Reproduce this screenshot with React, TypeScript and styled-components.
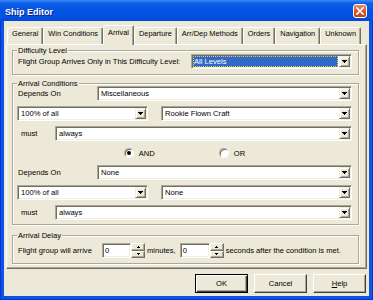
import React from 'react';
import styled, { createGlobalStyle, css } from 'styled-components';

const GlobalStyle = createGlobalStyle`
  html, body { margin: 0; padding: 0; background: #ECE9D8; }
  body {
    font-family: "Liberation Sans", Arial, sans-serif;
    font-size: 7.6px;
    line-height: 9px;
    color: #000;
  }
  * { box-sizing: border-box; }
`;

const Window = styled.div`
  width: 373px;
  height: 300px;
  display: flex;
  flex-direction: column;
  background: #0A55E2;
  box-shadow: inset 1px 0 #0831D9, inset -1px 0 #0831D9, inset 0 -1px #0831D9;
  overflow: hidden;
`;

const TitleBar = styled.div`
  height: 21px;
  flex: none;
  display: flex;
  align-items: flex-start;
  padding: 4px 6px 0 5px;
  background: linear-gradient(to bottom, #3C8CF8 0%, #0E5FE8 15%, #0454E4 50%, #0352E3 80%, #0446D8 100%);
`;

const Title = styled.span`
  flex: 1;
  padding-top: 2px;
  font: bold 9px/12px "Liberation Sans", Arial, sans-serif;
  color: #fff;
  text-shadow: 1px 1px 0 #0A1F8F;
`;

const CloseButton = styled.div`
  width: 14px;
  height: 14px;
  border: 1px solid #fff;
  border-radius: 3px;
  background: linear-gradient(to bottom, #EC8C6C 0%, #DA5A36 45%, #C8411C 100%);
  display: flex;
  align-items: center;
  justify-content: center;
`;

const Client = styled.div`
  flex: 1;
  margin: 0 4px 4px;
  background: #ECE9D8;
  padding: 4px 2px 3px 2px;
  display: flex;
  flex-direction: column;
`;

const TabRow = styled.div`
  height: 20px;
  display: flex;
  align-items: flex-end;
  padding-left: 1px;
  margin-bottom: -1px;
  position: relative;
  z-index: 1;
`;

const Tab = styled.div<{ $active?: boolean }>`
  height: 17px;
  margin-bottom: 1px;
  padding: 1px 4px 0;
  border: 1px solid;
  border-bottom: none;
  border-color: #fff #716F64 transparent #fff;
  border-radius: 2px 2px 0 0;
  box-shadow: inset -1px 0 #ACA899;
  background: #ECE9D8;
  white-space: nowrap;
  font-size: 7.4px;
  ${(p) =>
    p.$active &&
    css`
      height: 20px;
      margin-bottom: 0;
      padding-top: 2px;
    `}
`;

const Panel = styled.div`
  flex: none;
  border: 1px solid;
  border-color: #fff #716F64 #716F64 #fff;
  box-shadow: inset -1px -1px #ACA899;
  padding: 5px 7px 4px 5px;
  display: flex;
  flex-direction: column;
`;

const Group = styled.div<{ $mt?: number; $pb: number }>`
  margin-top: ${(p) => p.$mt ?? 0}px;
  border: 1px solid #ACA899;
  box-shadow: inset 1px 1px #fff, 1px 1px #fff;
  padding: 0 6px ${(p) => p.$pb}px 4px;
`;

const GroupTitle = styled.div`
  display: table;
  height: 9px;
  margin: -5px 0 -4px 0;
  padding: 0 1px;
  background: #ECE9D8;
  position: relative;
`;

const GroupBody = styled.div<{ $pt: number }>`
  padding-top: ${(p) => p.$pt}px;
  display: flex;
  flex-direction: column;
  gap: 5px;
`;

const Row = styled.div<{ $h?: number; $gap?: number; $justify?: string }>`
  height: ${(p) => p.$h ?? 15}px;
  display: flex;
  align-items: center;
  gap: ${(p) => p.$gap ?? 0}px;
  justify-content: ${(p) => p.$justify ?? 'flex-start'};
  white-space: nowrap;
`;

const Label = styled.span<{ $w: number; $indent?: number }>`
  flex: 0 0 ${(p) => p.$w}px;
  padding-left: ${(p) => p.$indent ?? 1}px;
`;

const Text = styled.span<{ $ml?: number; $mr?: number }>`
  margin-left: ${(p) => p.$ml ?? 0}px;
  margin-right: ${(p) => p.$mr ?? 0}px;
  white-space: nowrap;
`;

const Sunken = css`
  height: 15px;
  border: 1px solid;
  border-color: #ACA899 #fff #fff #ACA899;
  box-shadow: inset 1px 1px #716F64, inset -1px -1px #F1EFE2;
  padding: 1px;
  background: #fff;
`;

const SelectBox = styled.div<{ $w?: number; $ml?: number }>`
  ${Sunken};
  display: flex;
  align-items: stretch;
  min-width: 0;
  flex: ${(p) => (p.$w ? `0 0 ${p.$w}px` : '1 1 0')};
  margin-left: ${(p) => p.$ml ?? 0}px;
`;

const SelectValue = styled.span<{ $selected?: boolean }>`
  flex: 1;
  min-width: 0;
  padding-left: 2px;
  line-height: 11px;
  white-space: nowrap;
  overflow: hidden;
  ${(p) =>
    p.$selected &&
    css`
      margin: 0 1px 0 0;
      padding-left: 1px;
      background: #316AC5;
      color: #fff;
      outline: 1px dotted #E8C860;
      outline-offset: -1px;
    `}
`;

const DropButton = styled.span`
  flex: 0 0 11px;
  display: flex;
  align-items: center;
  justify-content: center;
  background: #ECE9D8;
  border: 1px solid;
  border-color: #F1EFE2 #716F64 #716F64 #F1EFE2;
  box-shadow: inset 1px 1px #fff, inset -1px -1px #ACA899;
`;

const SpinInput = styled.div<{ $w: number }>`
  ${Sunken};
  flex: 0 0 ${(p) => p.$w}px;
  line-height: 11px;
  padding-left: 2px;
`;

const Spinner = styled.div`
  flex: 0 0 14px;
  height: 15px;
  display: flex;
  flex-direction: column;
`;

const SpinButton = styled.span`
  flex: 1;
  display: flex;
  align-items: center;
  justify-content: center;
  background: #ECE9D8;
  border: 1px solid;
  border-color: #fff #716F64 #716F64 #fff;
  box-shadow: inset -1px -1px #ACA899;
`;

const RadioItem = styled.label`
  display: flex;
  align-items: center;
  gap: 5px;
`;

const RadioCircle = styled.span<{ $checked?: boolean }>`
  width: 10px;
  height: 10px;
  border-radius: 50%;
  border: 1px solid;
  border-color: #ACA899 #fff #fff #ACA899;
  box-shadow: inset 1px 1px #716F64;
  background: #fff;
  display: flex;
  align-items: center;
  justify-content: center;
  &::after {
    content: '';
    width: 4px;
    height: 4px;
    border-radius: 50%;
    background: ${(p) => (p.$checked ? '#000' : 'transparent')};
  }
`;

const ButtonRow = styled.div`
  margin-top: 5px;
  height: 19px;
  display: flex;
  justify-content: flex-end;
  gap: 6px;
  padding-right: 1px;
`;

const Button = styled.div<{ $default?: boolean }>`
  width: 53px;
  height: 19px;
  display: flex;
  align-items: center;
  justify-content: center;
  background: #ECE9D8;
  border: 1px solid;
  border-color: #fff #404040 #404040 #fff;
  box-shadow: inset -1px -1px #ACA899;
  ${(p) =>
    p.$default &&
    css`
      border-color: #000;
      box-shadow: inset 1px 1px #fff, inset -1px -1px #404040, inset -2px -2px #ACA899;
    `}
`;

const Arrow = ({ up, w = 5, h = 3 }: { up?: boolean; w?: number; h?: number }) => (
  <svg width={w} height={h} viewBox={`0 0 ${w} ${h}`} shapeRendering="crispEdges">
    <polygon points={up ? `0,${h} ${w},${h} ${w / 2},0` : `0,0 ${w},0 ${w / 2},${h}`} fill="#000" />
  </svg>
);

const Select = ({ value, w, ml, selected }: { value: string; w?: number; ml?: number; selected?: boolean }) => (
  <SelectBox $w={w} $ml={ml}>
    <SelectValue $selected={selected}>{value}</SelectValue>
    <DropButton>
      <Arrow />
    </DropButton>
  </SelectBox>
);

const Spin = ({ value, w }: { value: string; w: number }) => (
  <>
    <SpinInput $w={w}>{value}</SpinInput>
    <Spinner>
      <SpinButton>
        <Arrow up w={3} h={2} />
      </SpinButton>
      <SpinButton>
        <Arrow w={3} h={2} />
      </SpinButton>
    </Spinner>
  </>
);

const tabs = ['General', 'Win Conditions', 'Arrival', 'Departure', 'Arr/Dep Methods', 'Orders', 'Navigation', 'Unknown'];

const Condition = ({ depends, craft }: { depends: string; craft: string }) => (
  <>
    <Row>
      <Label $w={80}>Depends On</Label>
      <Select value={depends} />
    </Row>
    <Row $gap={13}>
      <Select value="100% of all" w={131} />
      <Select value={craft} />
    </Row>
    <Row>
      <Label $w={38} $indent={4}>must</Label>
      <Select value="always" />
    </Row>
  </>
);

export default function App() {
  return (
    <>
      <GlobalStyle />
      <Window>
        <TitleBar>
          <Title>Ship Editor</Title>
          <CloseButton>
            <svg width="8" height="8" viewBox="0 0 8 8">
              <path d="M1 1 L7 7 M7 1 L1 7" stroke="#fff" strokeWidth="1.7" strokeLinecap="square" />
            </svg>
          </CloseButton>
        </TitleBar>
        <Client>
          <TabRow>
            {tabs.map((t) => (
              <Tab key={t} $active={t === 'Arrival'}>
                {t}
              </Tab>
            ))}
          </TabRow>
          <Panel>
            <Group $pb={5}>
              <GroupTitle>Difficulty Level</GroupTitle>
              <GroupBody $pt={3}>
                <Row $justify="space-between">
                  <Text $ml={1}>Flight Group Arrives Only in This Difficulty Level:</Text>
                  <Select value="All Levels" w={161} selected />
                </Row>
              </GroupBody>
            </Group>
            <Group $mt={8} $pb={4}>
              <GroupTitle>Arrival Conditions</GroupTitle>
              <GroupBody $pt={2}>
                <Condition depends="Miscellaneous" craft="Rookie Flown Craft" />
                <Row $h={14} $justify="center" $gap={64}>
                  <RadioItem>
                    <RadioCircle $checked />
                    AND
                  </RadioItem>
                  <RadioItem>
                    <RadioCircle />
                    OR
                  </RadioItem>
                </Row>
                <Condition depends="None" craft="None" />
              </GroupBody>
            </Group>
            <Group $mt={10} $pb={5}>
              <GroupTitle>Arrival Delay</GroupTitle>
              <GroupBody $pt={7}>
                <Row>
                  <Label $w={85}>Flight group will arrive</Label>
                  <Spin value="0" w={29} />
                  <Text $ml={2} $mr={4}>minutes,</Text>
                  <Spin value="0" w={30} />
                  <Text $ml={2}>seconds after the condition is met.</Text>
                </Row>
              </GroupBody>
            </Group>
          </Panel>
          <ButtonRow>
            <Button $default>OK</Button>
            <Button>Cancel</Button>
            <Button>
              <span>
                <u>H</u>elp
              </span>
            </Button>
          </ButtonRow>
        </Client>
      </Window>
    </>
  );
}
